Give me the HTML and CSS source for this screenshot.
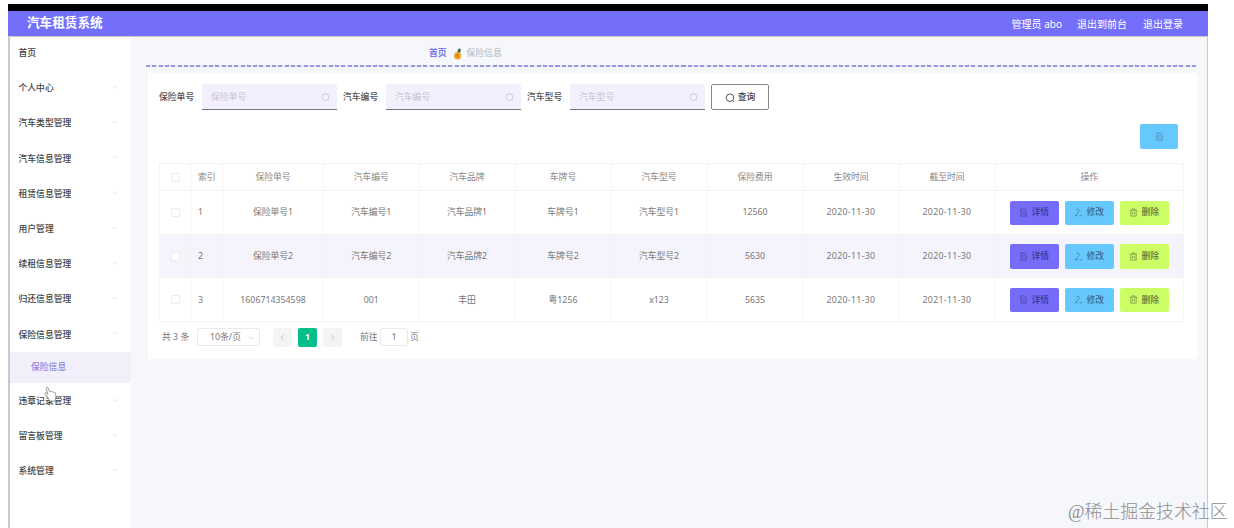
FILE: index.html
```html
<!DOCTYPE html>
<html lang="zh-CN">
<head>
<meta charset="utf-8">
<title>汽车租赁系统</title>
<link rel="stylesheet" href="styles.css">
</head>
<body>
<svg class="defs" width="0" height="0">
  <symbol id="search" viewBox="0 0 10 10"><circle cx="5" cy="4.7" r="3.8"/><path d="M7.6 7.4 8.8 8.8"/></symbol>
  <symbol id="doc" viewBox="0 0 10 10"><path d="M2 1h4.5L8 2.7V9H2zM3.7 4.2h2.6M3.7 6.4h2.6"/></symbol>
  <symbol id="edit" viewBox="0 0 10 10"><path d="M2.6 2.2 4.4 1 6 3 3.2 7 1.2 8.6H4M6 8.6h3.2"/></symbol>
  <symbol id="trash" viewBox="0 0 10 10"><path d="M1 2.5h8M3.5 2.5V1h3v1.5M2 2.5V9h6V2.5M4 4.3v3M6 4.3v3"/></symbol>
  <symbol id="down" viewBox="0 0 10 10"><path d="m2 4 3 2.5L8 4"/></symbol>
</svg>
<div class="window">
  <header class="topbar">
    <h1>汽车租赁系统</h1>
    <nav><span class="user">管理员 abo</span><span class="front">退出到前台</span><span>退出登录</span></nav>
  </header>
  <div class="body">
    <aside class="sidebar">
      <div class="item">首页</div>
      <div class="item">个人中心<svg><use href="#down"/></svg></div>
      <div class="item">汽车类型管理<svg><use href="#down"/></svg></div>
      <div class="item">汽车信息管理<svg><use href="#down"/></svg></div>
      <div class="item">租赁信息管理<svg><use href="#down"/></svg></div>
      <div class="item">用户管理<svg><use href="#down"/></svg></div>
      <div class="item">续租信息管理<svg><use href="#down"/></svg></div>
      <div class="item">归还信息管理<svg><use href="#down"/></svg></div>
      <div class="item">保险信息管理<svg><use href="#down"/></svg></div>
      <div class="subitem">保险信息</div>
      <div class="item">违章记录管理<svg><use href="#down"/></svg></div>
      <div class="item">留言板管理<svg><use href="#down"/></svg></div>
      <div class="item">系统管理<svg><use href="#down"/></svg></div>
    </aside>
    <main>
      <div class="crumbs">
        <b>首页</b>
        <svg class="medal" viewBox="0 0 9 12"><path d="M4 5 5.4.8h2.4L7.2 5z" fill="#3e6447"/><ellipse cx="4.6" cy="7.7" rx="3.6" ry="3.8" fill="#e9a92c"/><path d="M3.4 7.5 4.8 6v3.5" fill="none" stroke="#a66a18"/></svg>
        <span>保险信息</span>
      </div>
      <div class="divider"></div>
      <section class="card">
        <form class="filters">
          <label>保险单号</label><div class="field">保险单号<svg><use href="#search"/></svg></div>
          <label>汽车编号</label><div class="field">汽车编号<svg><use href="#search"/></svg></div>
          <label>汽车型号</label><div class="field">汽车型号<svg><use href="#search"/></svg></div>
          <div class="query"><svg><use href="#search"/></svg>查询</div>
        </form>
        <div class="tools"><div class="btn add"><svg><use href="#doc"/></svg></div></div>
        <div class="table">
          <div class="row head"><div><i class="check"></i></div><div class="idx">索引</div><div>保险单号</div><div>汽车编号</div><div>汽车品牌</div><div>车牌号</div><div>汽车型号</div><div>保险费用</div><div>生效时间</div><div>截至时间</div><div>操作</div></div>
          <div class="row"><div><i class="check"></i></div><div class="idx">1</div><div>保险单号1</div><div>汽车编号1</div><div>汽车品牌1</div><div>车牌号1</div><div>汽车型号1</div><div>12560</div><div class="date">2020-11-30</div><div class="date">2020-11-30</div><div class="ops"><span class="btn view"><svg><use href="#doc"/></svg>详情</span><span class="btn mod"><svg><use href="#edit"/></svg>修改</span><span class="btn del"><svg><use href="#trash"/></svg>删除</span></div></div>
          <div class="row striped"><div><i class="check"></i></div><div class="idx">2</div><div>保险单号2</div><div>汽车编号2</div><div>汽车品牌2</div><div>车牌号2</div><div>汽车型号2</div><div>5630</div><div class="date">2020-11-30</div><div class="date">2020-11-30</div><div class="ops"><span class="btn view"><svg><use href="#doc"/></svg>详情</span><span class="btn mod"><svg><use href="#edit"/></svg>修改</span><span class="btn del"><svg><use href="#trash"/></svg>删除</span></div></div>
          <div class="row"><div><i class="check"></i></div><div class="idx">3</div><div>1606714354598</div><div>001</div><div>丰田</div><div>粤1256</div><div>x123</div><div>5635</div><div class="date">2020-11-30</div><div class="date">2021-11-30</div><div class="ops"><span class="btn view"><svg><use href="#doc"/></svg>详情</span><span class="btn mod"><svg><use href="#edit"/></svg>修改</span><span class="btn del"><svg><use href="#trash"/></svg>删除</span></div></div>
        </div>
        <div class="pager">
          <span class="total">共 3 条</span>
          <span class="size">10条/页<svg><use href="#down"/></svg></span>
          <span class="page prev"><svg viewBox="0 0 10 10"><path d="M6 2 3.5 5 6 8"/></svg></span>
          <span class="page current">1</span>
          <span class="page next"><svg viewBox="0 0 10 10"><path d="M4 2 6.5 5 4 8"/></svg></span>
          <span class="goto">前往</span><span class="jump">1</span><span>页</span>
        </div>
      </section>
    </main>
  </div>
</div>
<svg class="cursor" viewBox="0 0 14 18"><path d="M3.7 11.2 1.2 8.6C.3 7.3 1.5 6.6 2.6 7.4L4 8.6 2.5 2.5C2.2.8 4 .5 4.5 2L6 6l1-.6 1.3.8 1.2-.4 1 1 1.4-.1c.8 2.4 1.2 4 .6 6.3l-.6 3H6.2z"/></svg>
<div class="watermark">@稀土掘金技术社区</div>
</body>
</html>
```
FILE: styles.css
```css
* { box-sizing: border-box; }
body {
  margin: 0;
  height: 528px;
  overflow: hidden;
  background: #fff;
  font: 8.8px/1 "Noto Sans", "Noto Sans CJK SC", sans-serif;
  color: #777;
  white-space: nowrap;
}
svg { flex: none; width: 9px; height: 9px; fill: none; stroke: currentColor; stroke-width: .9; }
.defs { position: absolute; }
.window {
  width: 1200px;
  height: 524px;
  margin: 4px 0 0 8px;
  border-top: 7px solid #000;
}
.topbar {
  display: flex;
  align-items: center;
  justify-content: space-between;
  height: 25px;
  padding: 0 25px 0 19px;
  background: #746ffb;
  color: #fff;
}
.topbar h1 { margin: 0; font-size: 12.6px; font-weight: 700; }
.topbar nav { display: flex; font-size: 10px; }
.user { margin-right: 15px; }
.front { margin-right: 16px; }
.body {
  display: flex;
  height: 492px;
  border: solid #c9c9ce;
  border-width: 1px 1px 0 2px;
}
.sidebar { width: 121px; background: #fff; color: #444; font-weight: 500; }
.item {
  display: flex;
  align-items: center;
  justify-content: space-between;
  height: 35.2px;
  padding: 2px 12px 0 8.5px;
}
.item:first-child { height: 33px; padding-top: 0; }
.item svg { width: 8px; height: 8px; color: #dedee0; margin-top: -3px; }
.subitem {
  display: flex;
  align-items: center;
  height: 31px;
  padding: 1px 0 0 21px;
  background: #f1effa;
  color: #9186dd;
}
main { flex: 1; padding: 0 10px 0 15px; background: #f5f7fa; }
.crumbs {
  display: flex;
  align-items: center;
  height: 28px;
  padding: 5px 0 0 283px;
  color: #b5b5c0;
}
.crumbs b { color: #8078ee; }
.crumbs .medal { width: 9px; height: 12px; margin: 0 5px 0 6px; stroke: none; }
.divider { height: 2px; background: repeating-linear-gradient(90deg, #9e97e0 0 4px, #e9e8f8 4px 6.3px); }
.card {
  height: 286px;
  margin: 6px 0 0 2px;
  padding: 11px 13px 0 11px;
  background: #fff;
}
.filters { display: flex; align-items: center; height: 26px; }
.filters label { width: 43px; padding-top: 1px; color: #555; font-weight: 500; }
.field {
  display: flex;
  align-items: center;
  justify-content: space-between;
  width: 135px;
  height: 26px;
  margin-right: 6px;
  padding: 2px 7px 0 9px;
  border-bottom: 1.5px solid #777583;
  border-radius: 3px 3px 0 0;
  background: #f2f0fd;
  color: #c5c3d0;
}
.query {
  display: flex;
  align-items: center;
  justify-content: center;
  gap: 3px;
  width: 58px;
  height: 26px;
  padding-top: 1px;
  border: 1px solid #888;
  border-radius: 2px;
  color: #444;
  font-weight: 500;
}
.query svg { width: 10px; height: 10px; }
.tools { display: flex; justify-content: flex-end; height: 53px; padding: 14px 6px 0 0; }
.btn {
  display: flex;
  align-items: center;
  justify-content: center;
  gap: 3px;
  width: 49px;
  height: 24.5px;
  border-radius: 2px;
  font-weight: 500;
}
.btn svg { opacity: .75; }
.add { width: 38px; height: 25px; background: #66c8fd; color: #44799a; }
.view { background: #756cf9; color: #3b3788; }
.mod { background: #66c8fd; color: #3c6a86; }
.del { background: #ccfd64; color: #62763a; }
.table { width: 1025px; border: solid #f4f4f7; border-width: 1px 0 0 1px; }
.row {
  display: grid;
  grid-template-columns: 31px 32px 101px 95.5px 96px 96px 96px 96px 96px 96px 1fr;
  height: 43.6px;
}
.row > div {
  display: flex;
  align-items: center;
  justify-content: center;
  padding-top: 1px;
  border: solid #f4f4f7;
  border-width: 0 1px 1px 0;
}
.row.head { height: 27px; color: #888; }
.row > .idx { justify-content: flex-start; padding-left: 7px; }
.row .date { letter-spacing: .3px; }
.row .ops { gap: 6px; }
.striped { background: #f5f4fc; }
.check { width: 9px; height: 9px; border: 1px solid #ececef; border-radius: 2px; background: #fff; }
.pager { display: flex; align-items: center; height: 19px; margin-top: 6px; padding-left: 3px; }
.total { width: 35px; }
.size {
  display: flex;
  align-items: center;
  justify-content: space-between;
  width: 63px;
  height: 18px;
  margin-right: 13px;
  padding: 0 3px 0 12px;
  border: 1px solid #eaeaed;
  border-radius: 2px;
}
.size svg { color: #ccc; }
.page {
  display: flex;
  align-items: center;
  justify-content: center;
  width: 19px;
  height: 19px;
  margin-right: 6px;
  border-radius: 2px;
  background: #f4f4f6;
  color: #b8b8be;
}
.current { background: #06bd8e; color: #fff; font-weight: 700; }
.next { margin-right: 18px; }
.goto { width: 20px; }
.jump { width: 28px; height: 18px; margin-right: 2px; border: 1px solid #eaeaed; border-radius: 3px; line-height: 16px; text-align: center; }
.cursor { position: absolute; left: 44px; top: 386px; width: 13px; height: 17px; fill: #fff; stroke: #888; }
.watermark {
  position: absolute;
  left: 1068px;
  top: 502px;
  color: #8d8d92;
  font: 300 17.9px/20px "Liberation Serif", "Noto Sans CJK SC", serif;
}
```
